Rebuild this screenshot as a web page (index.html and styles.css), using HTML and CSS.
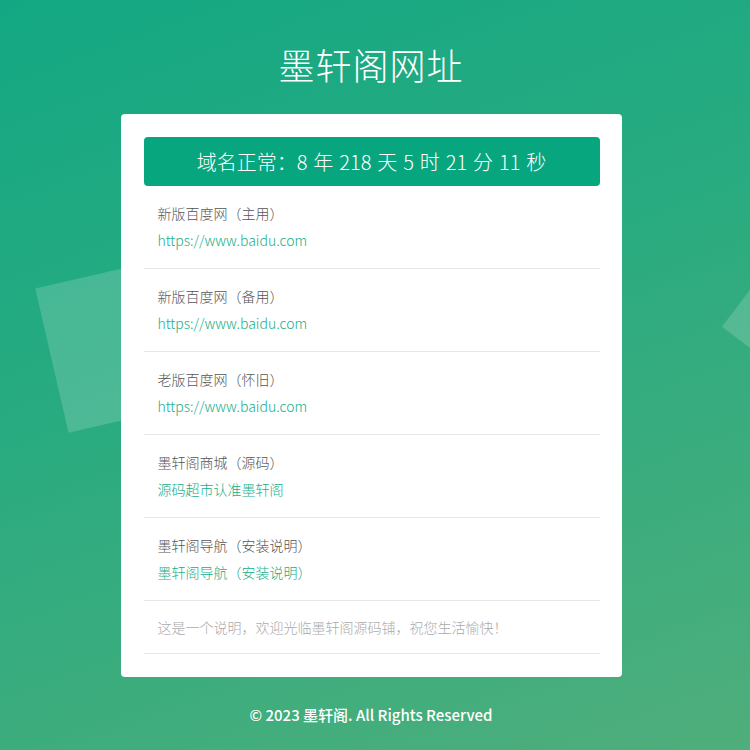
FILE: index.html
```html
<!DOCTYPE html>
<html lang="zh-CN">
<head>
<meta charset="utf-8">
<title>墨轩阁网址</title>
<link rel="stylesheet" href="styles.css">
</head>
<body>
<div class="page">
  <div class="shape shape-left"></div>
  <div class="shape shape-right"></div>
  <h1 class="title">墨轩阁网址</h1>
  <div class="card">
    <div class="status">域名正常：8 年 218 天 5 时 21 分 11 秒</div>
    <div class="item">
      <div class="item-name">新版百度网（主用）</div>
      <a class="item-link" href="#">https://www.baidu.com</a>
    </div>
    <div class="item">
      <div class="item-name">新版百度网（备用）</div>
      <a class="item-link" href="#">https://www.baidu.com</a>
    </div>
    <div class="item">
      <div class="item-name">老版百度网（怀旧）</div>
      <a class="item-link" href="#">https://www.baidu.com</a>
    </div>
    <div class="item">
      <div class="item-name">墨轩阁商城（源码）</div>
      <a class="item-link" href="#">源码超市认准墨轩阁</a>
    </div>
    <div class="item">
      <div class="item-name">墨轩阁导航（安装说明）</div>
      <a class="item-link" href="#">墨轩阁导航（安装说明）</a>
    </div>
    <div class="note">这是一个说明，欢迎光临墨轩阁源码铺，祝您生活愉快！</div>
  </div>
  <div class="footer">© 2023 墨轩阁. All Rights Reserved</div>
</div>
</body>
</html>
```
FILE: styles.css
```css
html, body {
  margin: 0;
  padding: 0;
}
body {
  font-family: "Noto Sans CJK SC", "Noto Sans", sans-serif;
  background: linear-gradient(160deg, #13a883 0%, #2aab80 45%, #4fae7b 100%);
  min-height: 750px;
  overflow: hidden;
}
.page {
  position: relative;
  height: 750px;
  display: flex;
  flex-direction: column;
  align-items: center;
  padding: 40px 8px 0 0;
  box-sizing: border-box;
  overflow: hidden;
}
.shape {
  position: absolute;
  background: rgba(255, 255, 255, 0.17);
}
.shape-left {
  width: 148px;
  height: 148px;
  left: 50px;
  top: 270px;
  transform: rotate(-13deg);
}
.shape-right {
  width: 80px;
  height: 80px;
  left: 738px;
  top: 279px;
  transform: rotate(37deg);
}
.title {
  position: relative;
  margin: 0;
  font-size: 36px;
  line-height: 48px;
  font-weight: 300;
  color: #fff;
  letter-spacing: 1px;
}
.card {
  position: relative;
  margin-top: 26px;
  width: 501px;
  box-sizing: border-box;
  background: #fff;
  border-radius: 4px;
  padding: 23px 22px 23px 23px;
}
.status {
  background: #08a67e;
  color: #fff;
  border-radius: 4px;
  height: 49px;
  display: flex;
  align-items: center;
  justify-content: center;
  font-size: 20px;
  font-weight: 300;
  word-spacing: 1.5px;
}
.item {
  padding: 14px 14px 14px;
  border-bottom: 1px solid #e6e6e6;
  display: flex;
  flex-direction: column;
}
.item-name {
  font-size: 14px;
  line-height: 27px;
  color: #555;
  font-weight: 300;
}
.item-link {
  font-size: 14px;
  line-height: 27px;
  color: #16ad88;
  text-decoration: none;
  font-weight: 300;
}
.note {
  padding: 13px 14px;
  font-size: 14px;
  line-height: 26px;
  color: #aaa;
  border-bottom: 1px solid #e6e6e6;
  font-weight: 300;
}
.footer {
  position: relative;
  margin-top: 26px;
  color: #fff;
  font-size: 15px;
  line-height: 24px;
  font-weight: 500;
}
```
